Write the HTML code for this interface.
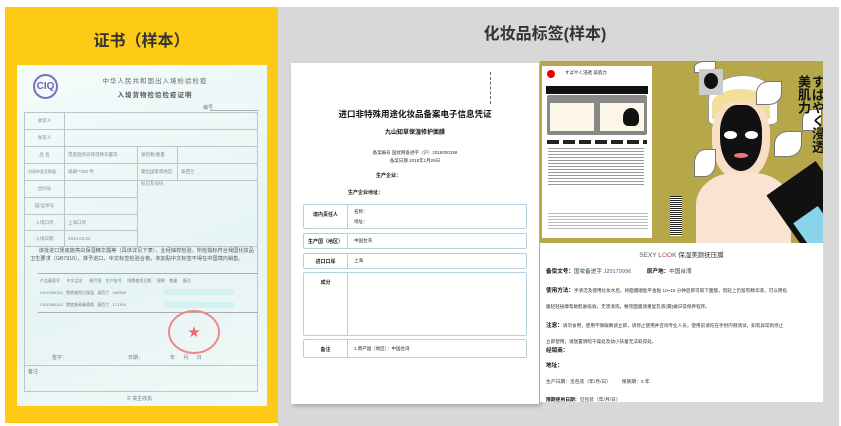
<!DOCTYPE html>
<html><head><meta charset="utf-8"><style>
*{margin:0;padding:0;box-sizing:border-box}
body{width:841px;height:426px;background:#fff;position:relative;overflow:hidden;font-family:"Liberation Sans","Noto Sans CJK SC",sans-serif}
.a{position:absolute}
.t{font-size:5px;color:#778;white-space:nowrap}
.c td{border:1px solid #b8c8c8;font-size:4.5px;color:#889;padding:0 3px}
.d{font-size:5px;color:#222;white-space:nowrap}
.box{position:absolute;left:303px;width:224px;border:1px solid #b9cedb;border-radius:2px;background:#fff}
.box .l{position:absolute;left:0;top:0;bottom:0;width:44px;border-right:1px solid #b9cedb;font-size:5px;font-weight:bold;text-align:center;color:#222}
.lb{font-size:5.6px;color:#333;white-space:nowrap}
.lb b{color:#111}
.fl{position:absolute;background:#fff;border-radius:50% 0;border:1px solid #777}
</style></head><body>
<div class="a" style="left:5px;top:7px;width:273px;height:416px;background:#fdcb16"></div>
<div class="a" style="left:278px;top:7px;width:561px;height:419px;background:#d8d8d8"></div>
<div class="a" style="left:0;top:27px;width:283px;text-align:center;font-size:16px;font-weight:bold;color:#333">证书（样本）</div>
<div class="a" style="left:440px;top:20px;width:210px;text-align:center;font-size:16px;font-weight:bold;color:#333">化妆品标签(样本)</div>

<!-- certificate -->
<div class="a" style="left:17px;top:65px;width:250px;height:341px;background:linear-gradient(160deg,#f4fbfb,#e6f4f3 60%,#f1f9f8)"></div>
<div class="a" style="left:33px;top:74px;width:25px;height:25px;border:2px solid #7a72b8;border-radius:50%;color:#6a63b0;font-size:10px;font-weight:bold;text-align:center;line-height:21px">CIQ</div>
<div class="a" style="left:80px;top:75px;width:150px;text-align:center;font-size:6.5px;color:#666;letter-spacing:1px">中华人民共和国出入境检验检疫</div>
<div class="a" style="left:80px;top:89px;width:150px;text-align:center;font-size:6.5px;color:#555;font-weight:bold;letter-spacing:1px">入境货物检验检疫证明</div>
<div class="a t" style="left:203px;top:104px">编号</div>
<div class="a" style="left:210px;top:110px;width:48px;height:1px;background:#aab"></div>
<table class="a c" style="left:24px;top:112px;width:234px;height:134px;border-collapse:collapse">
<tr style="height:17px"><td style="width:40px;text-align:center">收货人</td><td colspan="3"></td></tr>
<tr style="height:17px"><td style="text-align:center">发货人</td><td colspan="3"></td></tr>
<tr style="height:17px"><td style="text-align:center">品 名</td><td style="width:73px">煲底施亮白保湿精华露等</td><td style="width:40px">报检数/重量</td><td></td></tr>
<tr style="height:17px"><td style="font-size:4px">包装种类及数量</td><td>纸箱**200 件</td><td>输出国家或地区</td><td>泰西兰</td></tr>
<tr style="height:17px"><td style="text-align:center">合同号</td><td></td><td colspan="2" rowspan="4" style="vertical-align:top">标记及号码</td></tr>
<tr style="height:17px"><td style="text-align:center">提/运单号</td><td></td></tr>
<tr style="height:16px"><td style="text-align:center">入境口岸</td><td>上海口岸</td></tr>
<tr style="height:16px"><td style="text-align:center">入境日期</td><td>2013.04.24</td></tr>
</table>
<div class="a" style="left:24px;top:246px;width:234px;height:146px;border:1px solid #b8c8c8;border-top:none"></div>
<div class="a" style="left:24px;top:365px;width:234px;height:1px;background:#b8c8c8"></div>
<div class="a" style="left:30px;top:248px;width:225px;font-size:5.2px;line-height:7.5px;color:#555">&nbsp;&nbsp;&nbsp;&nbsp;&nbsp;&nbsp;该批进口煲底施亮白保湿精华露等（具体详见下表），业经抽样检验，所检指标符合我国化妆品卫生要求（GB7916），准予进口，中文标签检验合格，未加贴中文标签不得在中国境内销售。</div>
<div class="a" style="left:38px;top:273px;width:220px;height:1px;background:#aab"></div>
<div class="a t" style="left:40px;top:278px;font-size:4px">产品备案号 &nbsp;&nbsp;&nbsp;&nbsp;&nbsp;中文品名 &nbsp;&nbsp;&nbsp;&nbsp;&nbsp;原产国 &nbsp;&nbsp;&nbsp;生产批号 &nbsp;&nbsp;&nbsp;&nbsp;限期使用日期 &nbsp;&nbsp;&nbsp;&nbsp;规格 &nbsp;&nbsp;&nbsp;数量 &nbsp;&nbsp;&nbsp;&nbsp;备注</div>
<div class="a t" style="left:40px;top:290px;font-size:4px">C510300113 &nbsp;&nbsp;煲底施亮白保湿 &nbsp;&nbsp;泰西兰 &nbsp;&nbsp;040330</div>
<div class="a t" style="left:40px;top:302px;font-size:4px">C510300113 &nbsp;&nbsp;煲底施青春焕颜 &nbsp;&nbsp;泰西兰 &nbsp;&nbsp;171300</div>
<div class="a" style="left:164px;top:289px;width:70px;height:6px;background:#d3f1ee"></div>
<div class="a" style="left:164px;top:302px;width:70px;height:6px;background:#d3f1ee"></div>
<div class="a" style="left:38px;top:312px;width:220px;height:1px;background:#aab"></div>
<div class="a" style="left:168px;top:310px;width:52px;height:44px;border:2px solid #e88;border-radius:50%;color:#e66;font-size:12px;text-align:center;line-height:40px">★</div>
<div class="a t" style="left:52px;top:354px">签字：</div>
<div class="a t" style="left:128px;top:354px">日期：</div>
<div class="a t" style="left:170px;top:354px">年 &nbsp;&nbsp;&nbsp;&nbsp;&nbsp;月 &nbsp;&nbsp;&nbsp;&nbsp;&nbsp;日</div>
<div class="a t" style="left:28px;top:368px">备注</div>
<div class="a t" style="left:127px;top:395px">© 货主收执</div>

<!-- doc1 -->
<div class="a" style="left:291px;top:63px;width:248px;height:341px;background:#fff;box-shadow:2px 2px 4px rgba(0,0,0,.25)"></div>
<div class="a" style="left:490px;top:72px;width:1px;height:32px;border-left:1px dashed #666"></div>
<div class="a" style="left:291px;top:108px;width:248px;text-align:center;font-size:8.5px;font-weight:bold;color:#111">进口非特殊用途化妆品备案电子信息凭证</div>
<div class="a" style="left:291px;top:127px;width:248px;text-align:center;font-size:6px;font-weight:bold;color:#111">九山知草保湿修护面膜</div>
<div class="a" style="left:291px;top:150px;width:248px;text-align:center;font-size:4.5px;color:#333">备案编号 国妆网备进字（沪）2018000158</div>
<div class="a" style="left:291px;top:158px;width:248px;text-align:center;font-size:4.5px;color:#333">备案日期 2018年1月29日</div>
<div class="a d" style="left:376px;top:172px;font-weight:bold">生产企业：</div>
<div class="a d" style="left:348px;top:189px;font-weight:bold">生产企业地址：</div>
<div class="box" style="top:204px;height:25px"><div class="l" style="padding-top:6px">境内责任人</div><div class="a d" style="left:50px;top:4px;font-size:4.5px">名称：</div><div class="a d" style="left:50px;top:14px;font-size:4.5px">地址：</div></div>
<div class="box" style="top:233px;height:16px"><div class="l" style="padding-top:4px">生产国（地区）</div><div class="a d" style="left:50px;top:4px;font-size:4.5px">中国台湾</div></div>
<div class="box" style="top:253px;height:16px"><div class="l" style="padding-top:4px">进口口岸</div><div class="a d" style="left:50px;top:4px;font-size:4.5px">上海</div></div>
<div class="box" style="top:272px;height:64px"><div class="l" style="padding-top:6px">成分</div></div>
<div class="box" style="top:339px;height:19px"><div class="l" style="padding-top:6px">备注</div><div class="a d" style="left:50px;top:6px;font-size:4.5px">1.原产国（地区）：中国台湾</div></div>

<!-- label -->
<div class="a" style="left:540px;top:61px;width:283px;height:341px;background:#fff"></div>
<div class="a" style="left:540px;top:61px;width:283px;height:182px;background:#b6a84a"></div>
<div class="a" style="left:542px;top:66px;width:110px;height:172px;background:#fff"></div>
<div class="a" style="left:547px;top:70px;width:8px;height:8px;border-radius:50%;background:#e00"></div>
<div class="a" style="left:565px;top:70px;font-size:4.5px;color:#222">すばやく浸透 美肌力</div>
<div class="a" style="left:546px;top:86px;width:102px;height:8px;background:#111"></div>
<div class="a" style="left:547px;top:95px;width:100px;height:40px;background:#888;border-radius:2px"></div>
<div class="a" style="left:550px;top:103px;width:44px;height:28px;background:#fbf6e6"></div>
<div class="a" style="left:600px;top:103px;width:44px;height:28px;background:#fbf6e6"></div>
<div class="a" style="left:623px;top:108px;width:16px;height:18px;background:#111;border-radius:50% 50% 30% 30%"></div>
<div class="a" style="left:547px;top:140px;width:100px;height:4px;background:repeating-linear-gradient(90deg,#222 0 12px,#fff 12px 16px)"></div>
<div class="a" style="left:548px;top:148px;width:96px;height:38px;background:repeating-linear-gradient(180deg,#999 0 1px,#fff 1px 3px)"></div>
<div class="a" style="left:548px;top:213px;width:100px;height:18px;background:repeating-linear-gradient(180deg,#bbb 0 1px,#fff 1px 3px)"></div>
<div class="a" style="left:670px;top:196px;width:12px;height:40px;background:repeating-linear-gradient(180deg,#222 0 1px,#fff 1px 2px)"></div>
<div class="a" style="left:694px;top:61px;width:129px;height:182px;background:#b6a84a;overflow:hidden">
  <div class="a" style="left:14px;top:14px;width:70px;height:50px;background:#fff;border-radius:50% 50% 10% 10%;border:1px solid #999"></div>
  <div class="a" style="left:18px;top:28px;width:58px;height:30px;background:#f3df9a;border-radius:50% 50% 0 0"></div>
  <div class="a" style="left:18px;top:40px;width:58px;height:80px;background:#f7dfc6;border-radius:40% 40% 50% 50%"></div>
  <div class="a" style="left:26px;top:44px;width:42px;height:66px;background:#111;border-radius:40% 40% 50% 50%"></div>
  <div class="a" style="left:30px;top:70px;width:13px;height:8px;background:#fff;border-radius:50%"></div>
  <div class="a" style="left:51px;top:70px;width:13px;height:8px;background:#fff;border-radius:50%"></div>
  <div class="a" style="left:40px;top:92px;width:14px;height:5px;background:#e77;border-radius:50%"></div>
  <div class="a" style="left:2px;top:112px;width:95px;height:80px;background:#f9e4d3;border-radius:40% 40% 0 0"></div>
  <div class="fl" style="left:0px;top:0px;width:22px;height:12px"></div>
  <div class="fl" style="left:62px;top:20px;width:26px;height:24px"></div>
  <div class="fl" style="left:80px;top:70px;width:28px;height:26px"></div>
  <div class="fl" style="left:0px;top:88px;width:22px;height:28px"></div>
  <div class="fl" style="left:108px;top:48px;width:20px;height:22px"></div>
  <div class="a" style="left:5px;top:8px;width:24px;height:26px;background:#ccc"></div>
  <div class="a" style="left:10px;top:12px;width:14px;height:16px;background:#111;border-radius:50%"></div>
  <div class="a" style="left:82px;top:14px;font-size:13px;line-height:14px;color:#111;font-weight:bold;width:48px;height:150px;writing-mode:vertical-rl">すばやく浸透<br>美肌力</div>
  <div class="a" style="left:90px;top:110px;width:60px;height:80px;background:#111;transform:rotate(-35deg)"></div>
  <div class="a" style="left:108px;top:150px;width:30px;height:40px;background:#8ad4ea;transform:rotate(-35deg)"></div>
</div>
<div class="a" style="left:540px;top:249px;width:283px;text-align:center;font-size:6.5px;color:#333"><span style="color:#555">SEXY L</span><span style="color:#c44">OO</span><span style="color:#555">K</span> 保湿美颜抚压膜</div>
<div class="a lb" style="left:546px;top:267px"><b>备案文号：</b><span style="color:#243">国妆备进字</span> <span style="color:#558">J20179996</span> &nbsp;&nbsp;&nbsp;&nbsp;&nbsp;&nbsp;&nbsp;&nbsp;&nbsp;<b>原产地：</b>中国台湾</div>
<div class="a lb" style="left:546px;top:286px;font-size:4.6px"><b style="font-size:5.6px">使用方法：</b>手清洁及使用化妆水后，将面膜顺脸平金贴 10~15 分钟后即可取下面膜，借轻上仍留有精华液，可以用指</div>
<div class="a lb" style="left:546px;top:304px;font-size:4.6px">腹轻轻按摩帮助肌肤吸收，无须清洗。敷完面膜请重复乳液(霜)做日常保养程序。</div>
<div class="a lb" style="left:546px;top:321px;font-size:4.6px"><b style="font-size:5.6px">注意：</b>请勿食用，使用不慎眼睛请立即，请停止使用并咨询专业人员，使用前请先在手肘内侧测试，如有异常则停止</div>
<div class="a lb" style="left:546px;top:339px;font-size:4.6px">立即使用，请放置阴暗干燥处及幼小孩童无法取得处。</div>
<div class="a lb" style="left:546px;top:346px"><b>经销商：</b></div>
<div class="a lb" style="left:546px;top:361px"><b>地址：</b></div>
<div class="a lb" style="left:546px;top:378px;font-size:4.8px">生产日期：见包装（年/月/日） &nbsp;&nbsp;&nbsp;&nbsp;&nbsp;&nbsp;&nbsp;保质期：3 年</div>
<div class="a lb" style="left:546px;top:396px;font-size:4.8px"><b>限期使用日期：</b>见包装（年/月/日）</div>
</body></html>
